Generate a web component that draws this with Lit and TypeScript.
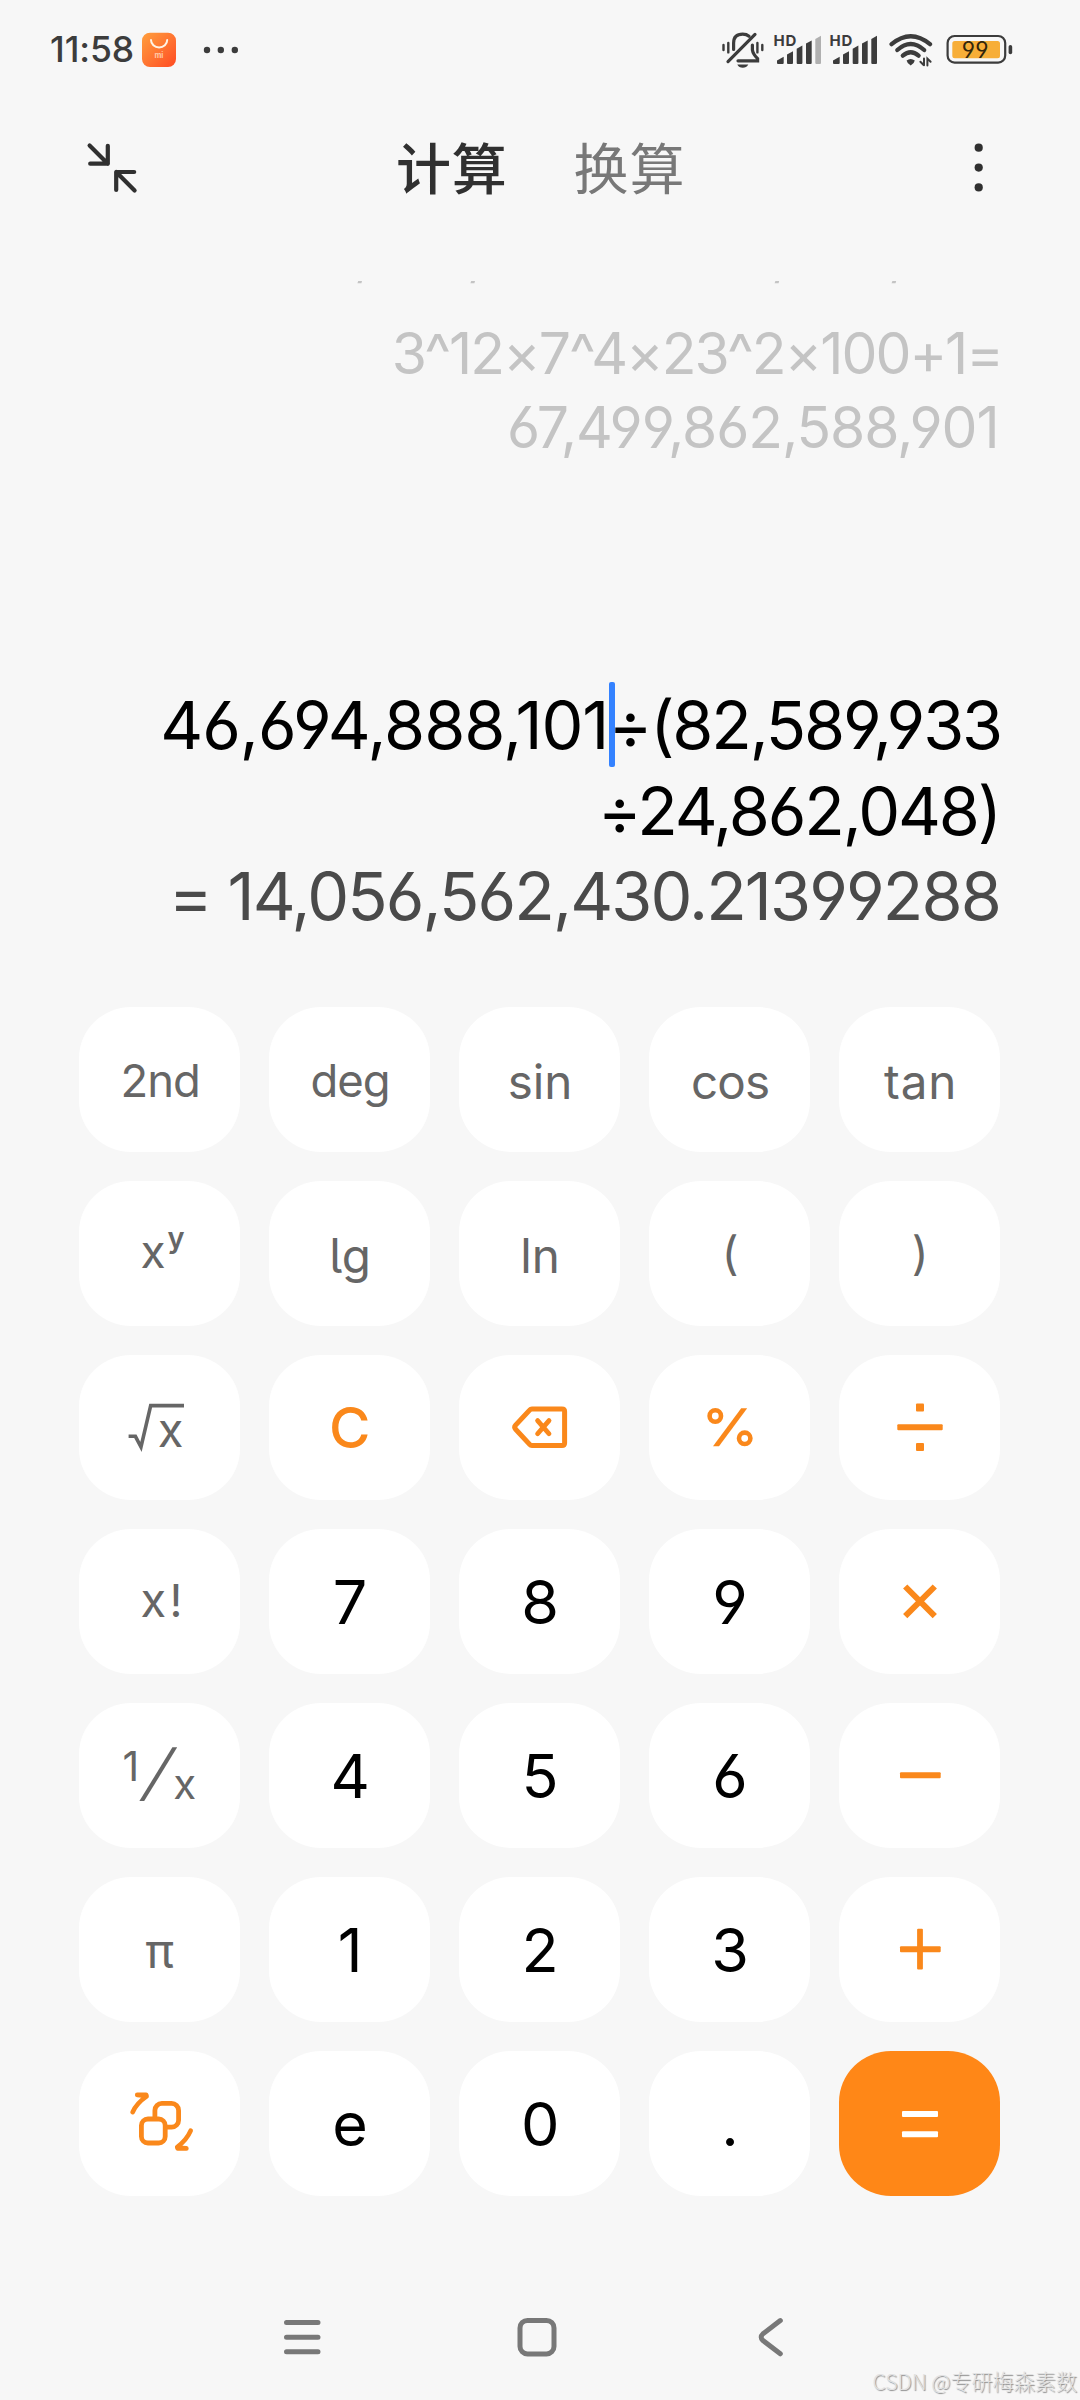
import { LitElement, html, css, svg, TemplateResult } from "lit";
import { customElement, property } from "lit/decorators.js";
import { classMap } from "lit/directives/class-map.js";

type Tone = "fn" | "num" | "accent" | "equals";
interface Key {
  id: string;
  tone: Tone;
  label?: string;
  cls?: string;
  art?: TemplateResult;
}

const KEYS: Key[] = [
  { id: "2nd", tone: "fn", label: "2nd", cls: "small" },
  { id: "deg", tone: "fn", label: "deg", cls: "small" },
  { id: "sin", tone: "fn", label: "sin", cls: "low" },
  { id: "cos", tone: "fn", label: "cos", cls: "low tight" },
  { id: "tan", tone: "fn", label: "tan", cls: "low loose" },

  { id: "power", tone: "fn", art: svg`
      <text x="61.4" y="87" font-size="46">x</text>
      <text x="88.6" y="67.2" font-size="29" font-weight="600">y</text>` },
  { id: "lg", tone: "fn", label: "lg", cls: "low tailed" },
  { id: "ln", tone: "fn", label: "ln", cls: "low" },
  { id: "open", tone: "fn", label: "(", cls: "paren" },
  { id: "close", tone: "fn", label: ")", cls: "paren" },

  { id: "sqrt", tone: "fn", art: svg`
      <path class="line" d="M49.6 81.3H56.4L62 92L71.7 50.6H105" stroke-width="3.6"/>
      <text x="78.8" y="91.6" font-size="47">x</text>` },
  { id: "clear", tone: "accent", label: "C", cls: "clear" },
  { id: "backspace", tone: "accent", art: svg`
      <path class="line" d="M73 53.9H103Q105.6 53.9 105.6 56.5V87.9Q105.6 90.5 103 90.5H73Q71.6 90.5 70.6 89.3L56.6 74.2Q54.8 72.2 56.6 70.2L70.6 55.1Q71.6 53.9 73 53.9Z" stroke-width="5"/>
      <path class="line" d="M78.6 65.6L90 78.8M90 65.6L78.6 78.8" stroke-width="4.8" stroke-linecap="round"/>` },
  { id: "percent", tone: "accent", art: svg`
      <circle class="line" cx="66.3" cy="61" r="5.7" stroke-width="4.6"/>
      <circle class="line" cx="95.7" cy="83.3" r="5.7" stroke-width="4.6"/>
      <path d="M92.2 53.3H98.2L70 91.3H64Z"/>` },
  { id: "divide", tone: "accent", art: svg`
      <rect x="58.3" y="69.3" width="45.4" height="6" rx="1"/>
      <rect x="77" y="48.6" width="8" height="8" rx="1"/>
      <rect x="77" y="88" width="8" height="8" rx="1"/>` },

  { id: "factorial", tone: "fn", art: svg`
      <text x="61.6" y="88" font-size="47">x</text>
      <text x="90.5" y="88" font-size="45">!</text>` },
  { id: "7", tone: "num", label: "7" },
  { id: "8", tone: "num", label: "8" },
  { id: "9", tone: "num", label: "9" },
  { id: "multiply", tone: "accent", art: svg`
      <path class="line" d="M66.2 57.5L95.8 87.1M95.8 57.5L66.2 87.1" stroke-width="6"/>` },

  { id: "inverse", tone: "fn", art: svg`
      <text x="43.5" y="77.6" font-size="41">1</text>
      <path d="M93.4 44.3H98.2L65.2 98.1H60.4Z"/>
      <text x="94.2" y="96" font-size="42">x</text>` },
  { id: "4", tone: "num", label: "4" },
  { id: "5", tone: "num", label: "5" },
  { id: "6", tone: "num", label: "6" },
  { id: "minus", tone: "accent", art: svg`<rect x="61" y="69.3" width="40.7" height="6" rx="1"/>` },

  { id: "pi", tone: "fn", label: "π", cls: "pi" },
  { id: "1", tone: "num", label: "1" },
  { id: "2", tone: "num", label: "2" },
  { id: "3", tone: "num", label: "3" },
  { id: "plus", tone: "accent", art: svg`
      <rect x="61" y="69.3" width="40.7" height="6" rx="1"/>
      <rect x="78.1" y="51.8" width="5.8" height="40.8" rx="1"/>` },

  { id: "switch", tone: "accent", art: svg`
      <rect class="line" x="62.4" y="68" width="23.8" height="24" rx="6.5" stroke-width="4.8"/>
      <path class="line" d="M75.9 67V59.4a7 7 0 0 1 7-7H92.6a7 7 0 0 1 7 7V69.2a7 7 0 0 1-7 7H87" stroke-width="4.8"/>
      <g class="line" stroke-width="4.6" stroke-linecap="round" stroke-linejoin="round">
        <path d="M53.6 61.2Q57.6 52.2 67.6 45.4L67.2 43.9H58.2L66 44.6"/>
        <path d="M111.7 79.6Q107.8 88.8 98.2 96L98.6 97.4H107.4L99.8 96.8"/>
      </g>` },
  { id: "e", tone: "num", label: "e" },
  { id: "0", tone: "num", label: "0" },
  { id: "point", tone: "num", label: "." },
  { id: "equals", tone: "equals", art: svg`
      <rect x="63" y="60" width="36" height="6" rx="1"/>
      <rect x="63" y="80.3" width="36" height="6" rx="1"/>` },
];

const FONT = css`"Inter", "Roboto", "Liberation Sans", sans-serif`;

@customElement("calc-key")
class CalcKey extends LitElement {
  @property({ attribute: false }) data!: Key;

  static styles = css`
    :host { display: block; }
    .key {
      display: flex; align-items: center; justify-content: center;
      width: 100%; height: 100%; box-sizing: border-box;
      margin: 0; padding: 0; border: 0; border-radius: 52px / 51px;
      background: #fff; color: #666;
      font-family: ${FONT}; font-size: 47.6px; line-height: 1;
      font-feature-settings: "cv03", "cv04";
    }
    .num { color: #000; font-size: 61px; padding: 2px 0 0 1px; }
    .accent { color: #fa881b; }
    .equals { background: #ff8717; color: #fff; }
    .small { font-size: 45.4px; letter-spacing: -1px; padding: 2px 0 0 1px; }
    .low { padding: 4.6px 0 0 1px; }
    .pi { padding-top: 3px; }
    .tight { letter-spacing: -0.8px; }
    .loose { letter-spacing: 0.8px; padding-left: 2px; }
    .tailed { font-feature-settings: "cv05"; }
    .paren { font-size: 46px; padding-left: 1px; }
    .clear { font-size: 56.5px; font-weight: 500; padding-top: 1px; }
    svg { display: block; width: 161.3px; height: 145.3px; fill: currentColor; }
    .line { fill: none; stroke: currentColor; }
  `;

  render() {
    const { id, tone, label, cls, art } = this.data;
    const classes: Record<string, boolean> = { key: true, [tone]: true };
    for (const c of (cls ?? "").split(" ").filter(Boolean)) classes[c] = true;
    return html`<button class=${classMap(classes)} aria-label=${id}>
      ${art ? html`<svg viewBox="0 0 161.3 145.3">${art}</svg>` : label}
    </button>`;
  }
}

@customElement("status-bar")
class StatusBar extends LitElement {
  static styles = css`
    :host { display: block; }
    .bar { display: flex; align-items: center; height: 40px; padding: 30px 67px 0 50px; color: #3c3c3c; }
    .time { width: 92px; font: 450 35.5px/42px ${FONT}; letter-spacing: -0.1px; white-space: nowrap; }
    svg { display: block; height: 40px; fill: currentColor; flex: none; }
    .line { fill: none; stroke: currentColor; stroke-linecap: round; }
    .dots { margin-left: 26px; }
    .icons { display: flex; margin-left: auto; }
    .signal { margin-left: 6px; }
    .second { margin-left: 4px; }
    .wifi { margin-left: 8px; }
    .battery { margin-left: 11px; }
    text { font-family: ${FONT}; font-feature-settings: "cv03", "cv04"; }
  `;

  private signal(cls: string, full: boolean) {
    return html`<svg class="signal ${cls}" width="52" viewBox="772 30 52 40">
      <text x="773.4" y="45.6" font-size="15" font-weight="650" textLength="23">HD</text>
      <path d="M777 60.5L783.7 56.7V63Q783.7 64 782.7 64H778Q777 64 777 63Z"/>
      <path d="M787 54.5L793 51.3V63Q793 64 792 64H788Q787 64 787 63Z"/>
      <path d="M796.7 48.8L802.4 45.6V63Q802.4 64 801.4 64H797.7Q796.7 64 796.7 63Z"/>
      <path d="M806 43.6L811.7 40.4V63Q811.7 64 810.7 64H807Q806 64 806 63Z"/>
      <path fill=${full ? "currentColor" : "#b0b0b0"} d="M815.3 39L821 35.8V63Q821 64 820 64H816.3Q815.3 64 815.3 63Z"/>
    </svg>`;
  }

  render() {
    return html`<div class="bar">
      <span class="time">11:58</span>
      <svg width="35" viewBox="142 30 35 40">
        <defs><linearGradient id="bag" x1="0" y1="0" x2="1" y2="1">
          <stop offset="0" stop-color="#ff9f3d"/><stop offset=".5" stop-color="#ff7632"/><stop offset="1" stop-color="#ff4a22"/>
        </linearGradient></defs>
        <rect x="142" y="32.7" width="34" height="34.4" rx="8" fill="url(#bag)"/>
        <path d="M151 40A8 7.4 0 0 0 167.2 40" fill="none" stroke="#fff3e6" stroke-width="2" stroke-linecap="round"/>
        <text x="154.6" y="58" font-size="7.6" font-weight="700" fill="#ffc9a6" textLength="8.6">mi</text>
      </svg>
      <svg class="dots" width="36" viewBox="203 30 36 40">
        <circle cx="207" cy="50" r="3.2"/><circle cx="220.8" cy="50" r="3.2"/><circle cx="234.8" cy="50" r="3.2"/>
      </svg>
      <div class="icons">
        <svg width="46" viewBox="720 30 46 40">
          <g class="line" stroke-width="3.2">
            <path d="M755 34.4L728 61.6"/>
            <path d="M733.6 49.5V43Q733.6 34.3 742.7 34.2Q746.6 34.2 749 36.2"/>
            <path d="M752.4 45V50Q753 54 757.6 58.6V60.8H738"/>
          </g>
          <g class="line" stroke-width="2.4">
            <path d="M723.5 45V50M728.3 43V52.4M757.4 43V52.4M762.3 45V50"/>
          </g>
          <path d="M737.3 64.5H748.3Q746.5 67.8 742.8 67.8Q739 67.8 737.3 64.5Z"/>
        </svg>
        ${this.signal("", false)}${this.signal("second", true)}
        <svg class="wifi" width="46" viewBox="888 30 46 40">
          <g class="line" stroke-width="4.3">
            <path d="M891.6 44.2Q910.7 28.3 930 44.2"/>
            <path d="M897.3 50Q910.7 38 924.2 50"/>
            <path d="M902.8 55.6Q910.7 48.8 918.6 55.6"/>
          </g>
          <path d="M906.6 60.6Q910.7 57.6 914.8 60.6Q914.4 63.4 910.7 65.4Q907 63.4 906.6 60.6Z"/>
          <path class="line" stroke-width="2" d="M924 58.4V65.2M920.4 61.8L923.6 65M927.4 65.4V58.6L930.6 61.8"/>
        </svg>
        <svg class="battery" width="68" viewBox="945 30 68 40">
          <rect x="947.6" y="36" width="57.6" height="26.6" rx="7" fill="none" stroke="currentColor" stroke-width="2.2"/>
          <rect x="952.3" y="41" width="47.7" height="17.2" rx="2.5" fill="#f7ae38"/>
          <rect x="1008.6" y="45" width="3.6" height="9.2" rx="1.8"/>
          <text x="961.8" y="58" font-size="22.8" textLength="26.6" fill="#33260c">99</text>
        </svg>
      </div>
    </div>`;
  }
}

@customElement("app-root")
class AppRoot extends LitElement {
  static styles = css`
    :host { display: block; }
    .screen {
      position: relative; display: flex; flex-direction: column;
      width: 1080px; height: 2400px; overflow: hidden; background: #f7f7f7;
    }
    svg { display: block; flex: none; fill: currentColor; }
    .line { fill: none; stroke: currentColor; stroke-linecap: round; stroke-linejoin: round; }

    .header { display: flex; align-items: center; height: 100px; margin-top: 48px; padding: 0 90px 0 84px; color: #303030; }
    .tabs { display: flex; gap: 66px; margin-left: 256px; font: 500 55px/80px "Noto Sans CJK SC", sans-serif; letter-spacing: 0.8px; padding-bottom: 6px; }
    .muted { color: #787878; font-weight: 400; }
    .menu { margin-left: auto; }

    .history { display: flex; flex-direction: column; align-items: flex-end; height: 401.3px; margin-top: 63px; color: #c4c4c4;
      font: 400 57px/74px ${FONT}; font-feature-settings: "cv03", "cv04"; white-space: pre; }
    .residue { width: 1080px; height: 36.3px; }
    .past { padding-right: 78px; letter-spacing: -2px; }
    .past-result { padding-right: 81.5px; letter-spacing: -1.1px; }

    .display { height: 323.4px; padding-top: 1px; display: flex; flex-direction: column; align-items: flex-end; padding-right: 80px; color: #000;
      font: 400 66.5px/85.2px ${FONT}; font-feature-settings: "cv03", "cv04"; white-space: pre; }
    .row { display: flex; }
    .before { position: relative; letter-spacing: -1.02px; }
    .after { letter-spacing: -2.15px; margin-right: -1px; }
    .caret { position: absolute; right: -6.5px; top: -1px; width: 6px; height: 85px; border-radius: 2px; background: #3482ff; }
    .second { letter-spacing: -2.12px; }
    .result { letter-spacing: -1.88px; color: #4a4a4a; }

    .pad { display: grid; grid-template-columns: repeat(5, 161.3px); grid-auto-rows: 145.3px; gap: 28.7px; padding-left: 79px; }
    .nav { display: flex; align-items: center; height: 50px; margin-top: 116px; padding-left: 280px; color: #787878; }
    .home { margin-left: 190px; }
    .back { margin-left: 193px; }
    .watermark {
      position: absolute; right: 3px; bottom: 4px; font: 300 21.1px/30px "Noto Sans CJK SC", sans-serif;
      color: #e2e2e2; text-shadow: 1px 1px 1px #8c8c8c; white-space: nowrap;
    }
  `;

  render() {
    return html`<div class="screen">
      <status-bar></status-bar>
      <header class="header">
        <svg width="56" height="56" viewBox="84 140 56 56">
          <path class="line" stroke-width="4.2" d="M89.6 145.5L107.8 163.7M107.8 145.8V163.7H90.2M134.6 190.5L116.2 172M116.2 190V172H134.2"/>
        </svg>
        <nav class="tabs"><span>计算</span><span class="muted">换算</span></nav>
        <svg class="menu" width="22" height="56" viewBox="968 140 22 56">
          <circle cx="978.7" cy="147.7" r="4.1"/><circle cx="978.7" cy="167.6" r="4.1"/><circle cx="978.7" cy="187.4" r="4.1"/>
        </svg>
      </header>

      <section class="history">
        <svg class="residue" viewBox="0 281 1080 36.3">
          <path d="M358.2 281H362L361.4 283.2H357.4ZM471.2 281H475L474.4 283.2H470.4ZM775.4 281H779.2L778.6 283.2H774.6ZM892.4 281H896.2L895.6 283.2H891.6Z"/>
        </svg>
        <div class="past">3^12×7^4×23^2×100+1=</div>
        <div class="past-result">67,499,862,588,901</div>
      </section>

      <section class="display">
        <div class="row"><span class="before">46,694,888,101<i class="caret"></i></span><span class="after">÷(82,589,933</span></div>
        <div class="second">÷24,862,048)</div>
        <div class="result">= 14,056,562,430.21399288</div>
      </section>

      <main class="pad">${KEYS.map((k) => html`<calc-key .data=${k}></calc-key>`)}</main>

      <footer class="nav">
        <svg width="44" height="50" viewBox="280 2312.8 44 50">
          <path class="line" stroke-width="5" d="M286.5 2323.4H318M286.5 2338H318M286.5 2352.6H318"/>
        </svg>
        <svg class="home" width="46" height="50" viewBox="514 2312.8 46 50">
          <rect class="line" stroke-width="5" x="520" y="2321.2" width="34" height="33.6" rx="7.5"/>
        </svg>
        <svg class="back" width="40" height="50" viewBox="753 2312.8 40 50">
          <path class="line" stroke-width="5" d="M780.3 2321.4L763 2334.6Q759.4 2338 763 2341.4L780.3 2354.6"/>
        </svg>
      </footer>
      <div class="watermark">CSDN @专研梅森素数</div>
    </div>`;
  }
}
